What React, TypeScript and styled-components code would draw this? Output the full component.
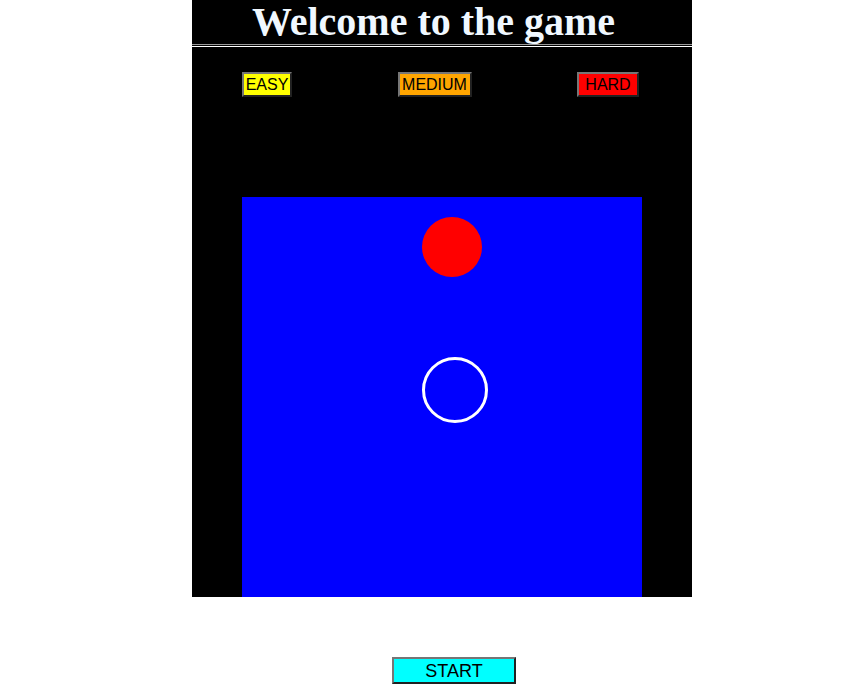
import React from "react";
import styled, { createGlobalStyle } from "styled-components";

const Global = createGlobalStyle`
  html, body { margin: 0; padding: 0; background: #fff; }
  body { font-family: "Liberation Sans", Arial, sans-serif; }
`;

const Page = styled.div`
  padding-left: 192px;
`;

const Board = styled.div`
  width: 500px;
  height: 597px;
  background: #000;
  display: flex;
  flex-direction: column;
`;

const Title = styled.h1`
  margin: 0;
  height: 44px;
  font-family: "Liberation Serif", "Times New Roman", serif;
  font-weight: bold;
  font-size: 40px;
  line-height: 44px;
  color: aliceblue;
  text-align: center;
  padding-right: 17px;
  white-space: nowrap;
`;

const Rule = styled.div`
  height: 1px;
  border-top: 1px solid #9a9a9a;
  border-bottom: 1px solid #ffffff;
`;

const Levels = styled.div`
  margin-top: 25px;
  padding: 0 53px 0 50px;
  display: flex;
  justify-content: space-between;
  align-items: center;
`;

const LevelButton = styled.button<{ $bg: string; $w: number }>`
  width: ${(p) => p.$w}px;
  height: 25px;
  padding: 0;
  background: ${(p) => p.$bg};
  border: 2px outset #767676;
  font-family: "Liberation Sans", Arial, sans-serif;
  font-size: 16px;
  color: #000;
  line-height: 1;
  cursor: pointer;
`;

const Field = styled.div`
  margin: 100px 0 0 50px;
  width: 400px;
  height: 400px;
  background: #0000ff;
  position: relative;
`;

const Ball = styled.div`
  position: absolute;
  left: 180px;
  top: 20px;
  width: 60px;
  height: 60px;
  border-radius: 50%;
  background: #ff0000;
`;

const Target = styled.div`
  position: absolute;
  left: 180px;
  top: 160px;
  width: 60px;
  height: 60px;
  border-radius: 50%;
  border: 3px solid #fff;
`;

const StartButton = styled.button`
  display: block;
  margin: 60px 0 0 200px;
  width: 124px;
  height: 27px;
  padding: 0;
  background: #00ffff;
  border: 2px outset #767676;
  font-family: "Liberation Sans", Arial, sans-serif;
  font-size: 18px;
  color: #000;
  line-height: 1;
  cursor: pointer;
`;

export default function App() {
  return (
    <Page>
      <Global />
      <Board>
        <Title>Welcome to the game</Title>
        <Rule />
        <Levels>
          <LevelButton $bg="#ffff00" $w={50}>EASY</LevelButton>
          <LevelButton $bg="#ffa500" $w={74}>MEDIUM</LevelButton>
          <LevelButton $bg="#ff0000" $w={62}>HARD</LevelButton>
        </Levels>
        <Field>
          <Ball />
          <Target />
        </Field>
      </Board>
      <StartButton>START</StartButton>
    </Page>
  );
}
